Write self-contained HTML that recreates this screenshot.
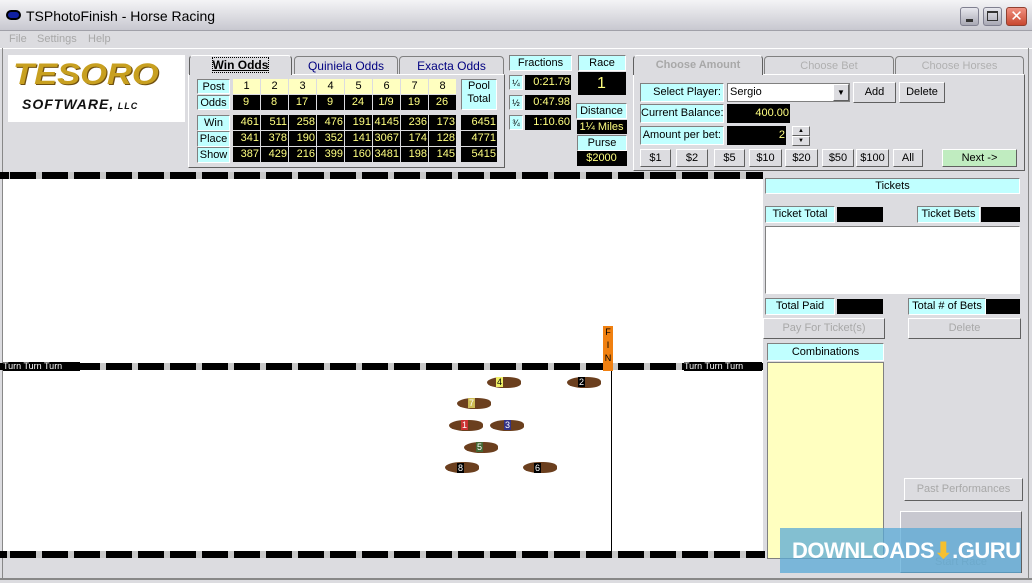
<!DOCTYPE html>
<html><head><meta charset="utf-8"><style>
*{box-sizing:border-box;margin:0;padding:0}
html,body{width:1032px;height:583px;overflow:hidden}
body{background:#dcdce0;font-family:"Liberation Sans",sans-serif;font-size:11px;position:relative;white-space:nowrap}
.a{position:absolute}
.c{position:absolute;background:#c0ffff;border:1px solid;border-color:#808080 #fff #fff #808080;text-align:center;line-height:14px;color:#000;overflow:hidden}
.k{position:absolute;background:#000;color:#ffff80;text-align:right;padding-right:1px;line-height:15px;font-size:11px;overflow:hidden}
.y{position:absolute;background:#ffffc0;color:#000;text-align:center;line-height:15px}
.b{position:absolute;background:#dcdce0;border:1px solid;border-color:#fff #606060 #606060 #fff;text-align:center;font-size:11px}
.rail{position:absolute;height:7px;background:repeating-linear-gradient(90deg,#000 0 26px,#c8c8c8 26px 32px);background-position:10px 0}
.tab{position:absolute;border:1px solid #808080;border-bottom:none;border-radius:4px 4px 0 0;text-align:center;line-height:18px;background:#dcdce0}
.h{position:absolute;width:34px;height:11px;border-radius:50% 40% 40% 50%;background:#6b3f1e}
.n{position:absolute;font-size:9px;line-height:10px;padding:0 1px;color:#fff;background:#000}
</style></head><body>
<div class="a" style="left:0;top:0;width:1032px;height:31px;background:linear-gradient(#f4f4f6,#c8c8d0);border-bottom:1px solid #a0a0a8"></div>
<div class="a" style="left:6px;top:10px;width:15px;height:10px;border-radius:5px;background:#1020a0;border:2px solid #000"></div>
<div class="a" style="left:26px;top:8px;font-size:14px;color:#000">TSPhotoFinish - Horse Racing</div>
<div class="a" style="left:960px;top:7px;width:19px;height:19px;border-radius:3px;background:linear-gradient(#e8e8ee,#a8a8b4);border:1px solid #808090"><div class="a" style="left:5px;top:11px;width:7px;height:3px;background:#333"></div></div>
<div class="a" style="left:983px;top:7px;width:19px;height:19px;border-radius:3px;background:linear-gradient(#e8e8ee,#a8a8b4);border:1px solid #808090"><div class="a" style="left:3px;top:3px;width:11px;height:10px;border:1px solid #333;border-top-width:2px"></div></div>
<div class="a" style="left:1006px;top:7px;width:21px;height:19px;border-radius:3px;background:linear-gradient(#f09080,#c84830);border:1px solid #904030;color:#fff;font-size:15px;line-height:17px;text-align:center">✕</div>
<div class="a" style="left:9px;top:33px;color:#a8a8a8">File</div>
<div class="a" style="left:37px;top:33px;color:#a8a8a8">Settings</div>
<div class="a" style="left:88px;top:33px;color:#a8a8a8">Help</div>
<div class="a" style="left:0;top:48px;width:1032px;height:1px;background:#fff"></div>
<div class="a" style="left:2px;top:48px;width:1px;height:530px;background:#888"></div>
<div class="a" style="left:1028px;top:48px;width:1px;height:530px;background:#888"></div>
<div class="a" style="left:0;top:578px;width:1032px;height:2px;background:#888"></div>
<!-- logo -->
<div class="a" style="left:8px;top:55px;width:177px;height:67px;background:#fff"></div>
<div class="a" style="left:13px;top:58px;font-size:30px;font-weight:bold;font-style:italic;color:#c8a020;letter-spacing:0px;transform:scaleX(1.15);transform-origin:left;text-shadow:1px 1px 0 #705010">TESORO</div>
<div class="a" style="left:22px;top:96px;font-size:14px;font-weight:bold;font-style:italic;color:#111;letter-spacing:1px">SOFTWARE,<span style="font-size:9px"> LLC</span></div>
<!-- odds tabs -->
<div class="a" style="left:188px;top:74px;width:317px;height:94px;border:1px solid;border-color:#fff #606060 #606060 #fff"></div>
<div class="tab" style="left:189px;top:55px;width:103px;height:20px;border-color:#fff #606060;font-size:12px"><span style="font-weight:bold;text-decoration:underline;outline:1px dotted #000">Win Odds</span></div>
<div class="tab" style="left:294px;top:56px;width:104px;height:18px;color:#000080;font-size:12px">Quiniela Odds</div>
<div class="tab" style="left:399px;top:56px;width:105px;height:18px;color:#000080;font-size:12px">Exacta Odds</div>
<div class="c" style="left:197px;top:79px;width:33px;height:15px">Post</div>
<div class="c" style="left:197px;top:95px;width:33px;height:15px">Odds</div>
<div class="c" style="left:197px;top:115px;width:33px;height:16px">Win</div>
<div class="c" style="left:197px;top:131px;width:33px;height:16px">Place</div>
<div class="c" style="left:197px;top:147px;width:33px;height:16px">Show</div>
<div class="c" style="left:461px;top:79px;width:36px;height:31px;line-height:13px">Pool<br>Total</div>
<div class="y" style="left:233px;top:79px;width:27px;height:15px">1</div><div class="y" style="left:261px;top:79px;width:27px;height:15px">2</div><div class="y" style="left:289px;top:79px;width:27px;height:15px">3</div><div class="y" style="left:317px;top:79px;width:27px;height:15px">4</div><div class="y" style="left:345px;top:79px;width:27px;height:15px">5</div><div class="y" style="left:373px;top:79px;width:27px;height:15px">6</div><div class="y" style="left:401px;top:79px;width:27px;height:15px">7</div><div class="y" style="left:429px;top:79px;width:27px;height:15px">8</div>
<div class="k" style="left:233px;top:95px;width:27px;height:15px;text-align:center">9</div><div class="k" style="left:261px;top:95px;width:27px;height:15px;text-align:center">8</div><div class="k" style="left:289px;top:95px;width:27px;height:15px;text-align:center">17</div><div class="k" style="left:317px;top:95px;width:27px;height:15px;text-align:center">9</div><div class="k" style="left:345px;top:95px;width:27px;height:15px;text-align:center">24</div><div class="k" style="left:373px;top:95px;width:27px;height:15px;text-align:center">1/9</div><div class="k" style="left:401px;top:95px;width:27px;height:15px;text-align:center">19</div><div class="k" style="left:429px;top:95px;width:27px;height:15px;text-align:center">26</div>
<div class="k" style="left:233px;top:115px;width:27px;height:15px">461</div><div class="k" style="left:261px;top:115px;width:27px;height:15px">511</div><div class="k" style="left:289px;top:115px;width:27px;height:15px">258</div><div class="k" style="left:317px;top:115px;width:27px;height:15px">476</div><div class="k" style="left:345px;top:115px;width:27px;height:15px">191</div><div class="k" style="left:373px;top:115px;width:27px;height:15px">4145</div><div class="k" style="left:401px;top:115px;width:27px;height:15px">236</div><div class="k" style="left:429px;top:115px;width:27px;height:15px">173</div><div class="k" style="left:461px;top:115px;width:36px;height:15px">6451</div>
<div class="k" style="left:233px;top:131px;width:27px;height:15px">341</div><div class="k" style="left:261px;top:131px;width:27px;height:15px">378</div><div class="k" style="left:289px;top:131px;width:27px;height:15px">190</div><div class="k" style="left:317px;top:131px;width:27px;height:15px">352</div><div class="k" style="left:345px;top:131px;width:27px;height:15px">141</div><div class="k" style="left:373px;top:131px;width:27px;height:15px">3067</div><div class="k" style="left:401px;top:131px;width:27px;height:15px">174</div><div class="k" style="left:429px;top:131px;width:27px;height:15px">128</div><div class="k" style="left:461px;top:131px;width:36px;height:15px">4771</div>
<div class="k" style="left:233px;top:147px;width:27px;height:15px">387</div><div class="k" style="left:261px;top:147px;width:27px;height:15px">429</div><div class="k" style="left:289px;top:147px;width:27px;height:15px">216</div><div class="k" style="left:317px;top:147px;width:27px;height:15px">399</div><div class="k" style="left:345px;top:147px;width:27px;height:15px">160</div><div class="k" style="left:373px;top:147px;width:27px;height:15px">3481</div><div class="k" style="left:401px;top:147px;width:27px;height:15px">198</div><div class="k" style="left:429px;top:147px;width:27px;height:15px">145</div><div class="k" style="left:461px;top:147px;width:36px;height:15px">5415</div>
<!-- fractions -->
<div class="c" style="left:509px;top:55px;width:63px;height:16px">Fractions</div>
<div class="c" style="left:509px;top:75px;width:14px;height:15px;font-size:9px">¼</div><div class="k" style="left:525px;top:75px;width:46px;height:15px">0:21.79</div>
<div class="c" style="left:509px;top:95px;width:14px;height:15px;font-size:9px">½</div><div class="k" style="left:525px;top:95px;width:46px;height:15px">0:47.98</div>
<div class="c" style="left:509px;top:115px;width:14px;height:15px;font-size:9px">¾</div><div class="k" style="left:525px;top:115px;width:46px;height:15px">1:10.60</div>
<div class="c" style="left:578px;top:55px;width:48px;height:16px">Race</div>
<div class="k" style="left:578px;top:72px;width:48px;height:23px;text-align:center;font-size:16px;line-height:23px">1</div>
<div class="c" style="left:576px;top:103px;width:51px;height:16px">Distance</div>
<div class="k" style="left:577px;top:120px;width:50px;height:14px;text-align:center;line-height:14px">1¼ Miles</div>
<div class="c" style="left:577px;top:135px;width:50px;height:16px">Purse</div>
<div class="k" style="left:577px;top:151px;width:50px;height:15px;text-align:center">$2000</div>
<!-- bet tabs -->
<div class="a" style="left:633px;top:74px;width:392px;height:97px;border:1px solid;border-color:#fff #606060 #606060 #fff"></div>
<div class="tab" style="left:633px;top:55px;width:130px;height:20px;border-color:#fff #606060;font-weight:bold;color:#a8a8a8">Choose Amount</div>
<div class="tab" style="left:764px;top:56px;width:130px;height:18px;color:#b0b0b0">Choose Bet</div>
<div class="tab" style="left:895px;top:56px;width:129px;height:18px;color:#b0b0b0">Choose Horses</div>
<div class="c" style="left:640px;top:83px;width:84px;height:19px;line-height:17px;text-align:right;padding-right:2px">Select Player:</div>
<div class="a" style="left:727px;top:83px;width:123px;height:19px;background:#fff;border:1px solid #808080;line-height:16px;padding-left:2px">Sergio<div class="a" style="right:0;top:0;width:16px;height:17px;background:#dcdce0;border:1px solid;border-color:#fff #606060 #606060 #fff;font-size:8px;text-align:center;line-height:15px">▼</div></div>
<div class="b" style="left:853px;top:82px;width:43px;height:21px;line-height:19px">Add</div>
<div class="b" style="left:899px;top:82px;width:46px;height:21px;line-height:19px">Delete</div>
<div class="c" style="left:640px;top:104px;width:84px;height:19px;line-height:17px">Current Balance:</div>
<div class="k" style="left:727px;top:104px;width:63px;height:19px;line-height:19px">400.00</div>
<div class="c" style="left:640px;top:126px;width:84px;height:19px;line-height:17px;text-align:right;padding-right:2px">Amount per bet:</div>
<div class="k" style="left:727px;top:126px;width:59px;height:19px;line-height:19px">2</div>
<div class="b" style="left:792px;top:126px;width:18px;height:10px;font-size:6px;line-height:8px">▲</div>
<div class="b" style="left:792px;top:136px;width:18px;height:10px;font-size:6px;line-height:8px">▼</div>
<div class="b" style="left:640px;top:149px;width:31px;height:18px;line-height:16px">$1</div>
<div class="b" style="left:676px;top:149px;width:32px;height:18px;line-height:16px">$2</div>
<div class="b" style="left:714px;top:149px;width:31px;height:18px;line-height:16px">$5</div>
<div class="b" style="left:749px;top:149px;width:33px;height:18px;line-height:16px">$10</div>
<div class="b" style="left:785px;top:149px;width:33px;height:18px;line-height:16px">$20</div>
<div class="b" style="left:822px;top:149px;width:32px;height:18px;line-height:16px">$50</div>
<div class="b" style="left:856px;top:149px;width:33px;height:18px;line-height:16px">$100</div>
<div class="b" style="left:893px;top:149px;width:30px;height:18px;line-height:16px">All</div>
<div class="b" style="left:942px;top:149px;width:75px;height:18px;line-height:16px;background:#c0ecc0">Next -&gt;</div>
<!-- track -->
<div class="a" style="left:3px;top:178px;width:760px;height:373px;background:#fff"></div>
<div class="rail" style="left:0;top:172px;width:763px"></div>
<div class="rail" style="left:0;top:363px;width:763px"></div>
<div class="rail" style="left:0;top:551px;width:765px"></div>
<div class="a" style="left:3px;top:362px;width:77px;height:9px;background:#000;color:#fff;font-size:9px;line-height:9px">Turn Turn Turn</div>
<div class="a" style="left:684px;top:362px;width:78px;height:9px;background:#000;color:#fff;font-size:9px;line-height:9px">Turn Turn Turn</div>
<div class="a" style="left:603px;top:326px;width:10px;height:45px;background:#f08010;font-size:9px;line-height:13px;text-align:center;color:#000">F<br>I<br>N</div>
<div class="a" style="left:611px;top:371px;width:1px;height:180px;background:#000"></div>
<div class="h" style="left:487px;top:377px"></div><div class="n" style="left:496px;top:377px;background:#ee6;color:#000">4</div>
<div class="h" style="left:567px;top:377px"></div><div class="n" style="left:578px;top:377px">2</div>
<div class="h" style="left:457px;top:398px"></div><div class="n" style="left:468px;top:398px;background:#cb5">7</div>
<div class="h" style="left:449px;top:420px"></div><div class="n" style="left:461px;top:420px;background:#c33">1</div>
<div class="h" style="left:490px;top:420px"></div><div class="n" style="left:504px;top:420px;background:#338">3</div>
<div class="h" style="left:464px;top:442px"></div><div class="n" style="left:476px;top:442px;background:#463">5</div>
<div class="h" style="left:445px;top:462px"></div><div class="n" style="left:457px;top:463px">8</div>
<div class="h" style="left:523px;top:462px"></div><div class="n" style="left:534px;top:463px">6</div>
<!-- right panel -->
<div class="c" style="left:765px;top:178px;width:255px;height:16px">Tickets</div>
<div class="c" style="left:765px;top:206px;width:70px;height:17px">Ticket Total</div>
<div class="a" style="left:837px;top:207px;width:46px;height:15px;background:#000"></div>
<div class="c" style="left:917px;top:206px;width:63px;height:17px">Ticket Bets</div>
<div class="a" style="left:981px;top:207px;width:39px;height:15px;background:#000"></div>
<div class="a" style="left:765px;top:226px;width:255px;height:68px;background:#fff;border:1px solid;border-color:#808080 #fff #fff #808080"></div>
<div class="c" style="left:765px;top:298px;width:70px;height:17px">Total Paid</div>
<div class="a" style="left:837px;top:299px;width:46px;height:15px;background:#000"></div>
<div class="c" style="left:908px;top:298px;width:78px;height:17px">Total # of Bets</div>
<div class="a" style="left:986px;top:299px;width:34px;height:15px;background:#000"></div>
<div class="b" style="left:763px;top:318px;width:122px;height:21px;line-height:19px;color:#a8a8a8">Pay For Ticket(s)</div>
<div class="b" style="left:908px;top:318px;width:113px;height:21px;line-height:19px;color:#a8a8a8">Delete</div>
<div class="c" style="left:767px;top:343px;width:117px;height:18px;line-height:16px">Combinations</div>
<div class="a" style="left:767px;top:362px;width:117px;height:197px;background:#ffffc0;border:1px solid #808080"></div>
<div class="b" style="left:904px;top:478px;width:119px;height:23px;line-height:21px;color:#a8a8a8">Past Performances</div>
<div class="b" style="left:900px;top:511px;width:122px;height:62px;line-height:100px;color:#a8a8a8;background:#c8c8d0">Start Race</div>
<div class="a" style="left:780px;top:528px;width:241px;height:45px;background:rgba(90,170,215,0.75);color:#fff;font-weight:bold;font-size:22px;line-height:45px;padding-left:12px;letter-spacing:-0.5px;overflow:hidden">DOWNLOADS<span style="color:#f5c030">⬇</span>.GURU</div>
</body></html>
